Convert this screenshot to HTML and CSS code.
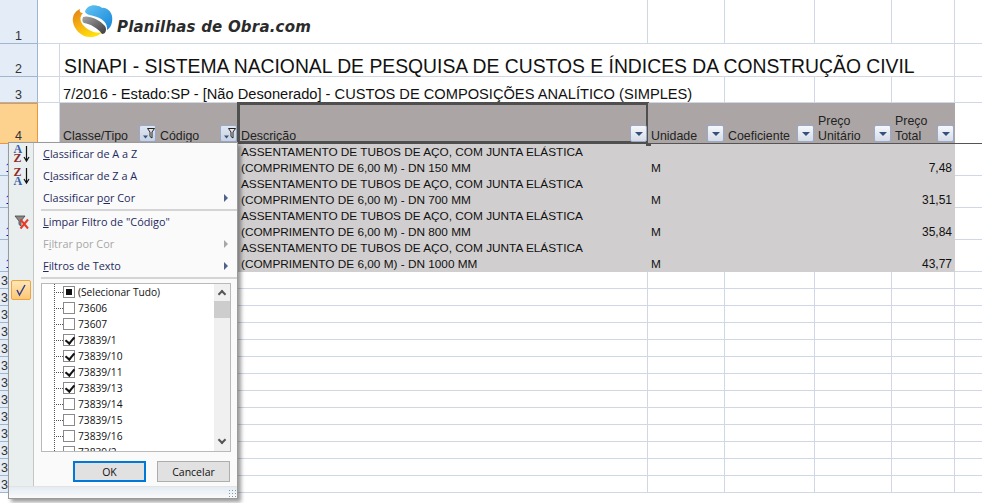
FILE: index.html
```html
<!DOCTYPE html>
<html lang="pt-BR">
<head>
    <meta charset="UTF-8">
    <title>SINAPI - Planilhas de Obra</title>
    <link rel="stylesheet" href="styles.css">
</head>
<body>
    <div class="sheet">
        <!-- row 1 -->
        <div class="rh">1</div>
        <div class="c logo-cell">
            <svg class="logo" width="44" height="36" viewBox="0 0 44 36">
                <defs>
                    <linearGradient id="gOrange" x1="0" y1="0" x2="0.6" y2="1">
                        <stop offset="0" stop-color="#e07f17"/>
                        <stop offset="0.5" stop-color="#f6ad12"/>
                        <stop offset="1" stop-color="#ffdf0a"/>
                    </linearGradient>
                    <linearGradient id="gBlue" x1="0" y1="0" x2="1" y2="1">
                        <stop offset="0" stop-color="#62c3f3"/>
                        <stop offset="1" stop-color="#1685d8"/>
                    </linearGradient>
                    <linearGradient id="gGray" x1="0" y1="0" x2="1" y2="1">
                        <stop offset="0" stop-color="#a5a5a5"/>
                        <stop offset="1" stop-color="#3b3b3b"/>
                    </linearGradient>
                </defs>
                <path d="M10 5C5 7 2 12 3 18C4 25 11 33 20 33C25 33 30 31 32 28C26 30 19 27 14 22C10 18 9 13 13 9C11 9 9 8 10 5Z" fill="url(#gOrange)"/>
                <path d="M15 8C16 3 22 0 28 2C30 2 31 3 32 4C36 3 41 7 42 12C43 18 41 24 37 26C38 20 33 15 27 13C22 11 18 12 15 8Z" fill="url(#gBlue)"/>
                <path d="M13 13C18 11 29 15 35 22C37 25 36 30 32 30C28 24 20 20 14 19C12 18 12 15 13 13Z" fill="url(#gGray)"/>
            </svg>
            <span class="logo-text">Planilhas de Obra.com</span>
        </div>
        <div class="c"></div><div class="c"></div><div class="c"></div><div class="c"></div><div class="c"></div>

        <!-- row 2 -->
        <div class="rh">2</div>
        <div class="c"></div>
        <div class="c title-cell">SINAPI - SISTEMA NACIONAL DE PESQUISA DE CUSTOS E ÍNDICES DA CONSTRUÇÃO CIVIL</div>
        <div class="c"></div>

        <!-- row 3 -->
        <div class="rh">3</div>
        <div class="c"></div>
        <div class="c sub-cell">7/2016 - Estado:SP - [Não Desonerado] - CUSTOS DE COMPOSIÇÕES ANALÍTICO (SIMPLES)</div>
        <div class="c"></div><div class="c"></div><div class="c"></div><div class="c"></div>

        <!-- row 4, table header -->
        <div class="rh rh-active">4</div>
        <div class="c head-gap"></div>
        <div class="c th"><span>Classe/Tipo</span><button class="fbtn on"><svg width="15" height="14" viewBox="0 0 15 14"><path d="M3 8.500h5l-2.500 3z" fill="#35507f"/><path d="M7.500 1.500h7l-2.500 3.500v6l-2-1.500v-4.500z" fill="#e4e4e4" stroke="#222"/></svg></button></div>
        <div class="c th"><span>Código</span><button class="fbtn on"><svg width="15" height="14" viewBox="0 0 15 14"><path d="M3 8.500h5l-2.500 3z" fill="#35507f"/><path d="M7.500 1.500h7l-2.500 3.500v6l-2-1.500v-4.500z" fill="#e4e4e4" stroke="#222"/></svg></button></div>
        <div class="c th selected"><span>Descrição</span><button class="fbtn"></button></div>
        <div class="c th"><span>Unidade</span><button class="fbtn"></button></div>
        <div class="c th"><span>Coeficiente</span><button class="fbtn"></button></div>
        <div class="c th"><span>Preço<br>Unitário</span><button class="fbtn"></button></div>
        <div class="c th"><span>Preço<br>Total</span><button class="fbtn"></button></div>
        <div class="c head-end"></div>

        <!-- rows 5-8, data -->
        <div class="rh rh-filtered">1234</div>
        <div class="c"></div><div class="c td"></div><div class="c td"></div>
        <div class="c td">ASSENTAMENTO DE TUBOS DE AÇO, COM JUNTA ELÁSTICA<br>(COMPRIMENTO DE 6,00 M) - DN 150 MM</div>
        <div class="c td">M</div><div class="c td"></div><div class="c td"></div><div class="c td num">7,48</div><div class="c"></div>

        <div class="rh rh-filtered">1235</div>
        <div class="c"></div><div class="c td"></div><div class="c td"></div>
        <div class="c td">ASSENTAMENTO DE TUBOS DE AÇO, COM JUNTA ELÁSTICA<br>(COMPRIMENTO DE 6,00 M) - DN 700 MM</div>
        <div class="c td">M</div><div class="c td"></div><div class="c td"></div><div class="c td num">31,51</div><div class="c"></div>

        <div class="rh rh-filtered">1236</div>
        <div class="c"></div><div class="c td"></div><div class="c td"></div>
        <div class="c td">ASSENTAMENTO DE TUBOS DE AÇO, COM JUNTA ELÁSTICA<br>(COMPRIMENTO DE 6,00 M) - DN 800 MM</div>
        <div class="c td">M</div><div class="c td"></div><div class="c td"></div><div class="c td num">35,84</div><div class="c"></div>

        <div class="rh rh-filtered">1237</div>
        <div class="c"></div><div class="c td"></div><div class="c td"></div>
        <div class="c td">ASSENTAMENTO DE TUBOS DE AÇO, COM JUNTA ELÁSTICA<br>(COMPRIMENTO DE 6,00 M) - DN 1000 MM</div>
        <div class="c td">M</div><div class="c td"></div><div class="c td"></div><div class="c td num">43,77</div><div class="c"></div>

        <!-- empty rows below the table -->
        <div class="rh">32076</div><div class="c"></div><div class="c"></div><div class="c"></div><div class="c"></div><div class="c"></div><div class="c"></div><div class="c"></div><div class="c"></div><div class="c"></div>
        <div class="rh">32077</div><div class="c"></div><div class="c"></div><div class="c"></div><div class="c"></div><div class="c"></div><div class="c"></div><div class="c"></div><div class="c"></div><div class="c"></div>
        <div class="rh">32078</div><div class="c"></div><div class="c"></div><div class="c"></div><div class="c"></div><div class="c"></div><div class="c"></div><div class="c"></div><div class="c"></div><div class="c"></div>
        <div class="rh">32079</div><div class="c"></div><div class="c"></div><div class="c"></div><div class="c"></div><div class="c"></div><div class="c"></div><div class="c"></div><div class="c"></div><div class="c"></div>
        <div class="rh">32080</div><div class="c"></div><div class="c"></div><div class="c"></div><div class="c"></div><div class="c"></div><div class="c"></div><div class="c"></div><div class="c"></div><div class="c"></div>
        <div class="rh">32081</div><div class="c"></div><div class="c"></div><div class="c"></div><div class="c"></div><div class="c"></div><div class="c"></div><div class="c"></div><div class="c"></div><div class="c"></div>
        <div class="rh">32082</div><div class="c"></div><div class="c"></div><div class="c"></div><div class="c"></div><div class="c"></div><div class="c"></div><div class="c"></div><div class="c"></div><div class="c"></div>
        <div class="rh">32083</div><div class="c"></div><div class="c"></div><div class="c"></div><div class="c"></div><div class="c"></div><div class="c"></div><div class="c"></div><div class="c"></div><div class="c"></div>
        <div class="rh">32084</div><div class="c"></div><div class="c"></div><div class="c"></div><div class="c"></div><div class="c"></div><div class="c"></div><div class="c"></div><div class="c"></div><div class="c"></div>
        <div class="rh">32085</div><div class="c"></div><div class="c"></div><div class="c"></div><div class="c"></div><div class="c"></div><div class="c"></div><div class="c"></div><div class="c"></div><div class="c"></div>
        <div class="rh">32086</div><div class="c"></div><div class="c"></div><div class="c"></div><div class="c"></div><div class="c"></div><div class="c"></div><div class="c"></div><div class="c"></div><div class="c"></div>
        <div class="rh">32087</div><div class="c"></div><div class="c"></div><div class="c"></div><div class="c"></div><div class="c"></div><div class="c"></div><div class="c"></div><div class="c"></div><div class="c"></div>
        <div class="rh">32088</div><div class="c"></div><div class="c"></div><div class="c"></div><div class="c"></div><div class="c"></div><div class="c"></div><div class="c"></div><div class="c"></div><div class="c"></div>
    </div>

    <!-- autofilter dropdown -->
    <div class="menu">
        <div class="menu-body">
            <div class="item">
                <span class="ico">
                    <svg width="22" height="22" viewBox="0 0 22 22">
                        <text x="2.500" y="9.500" class="az blue">A</text>
                        <text x="2.500" y="18.500" class="az red">Z</text>
                        <path d="M15.500 3v14M13 14l2.500 4 2.500-4" fill="none" stroke="#111" stroke-width="1.200"/>
                    </svg>
                </span>
                <span class="label"><u>C</u>lassificar de A a Z</span>
            </div>
            <div class="item">
                <span class="ico">
                    <svg width="22" height="22" viewBox="0 0 22 22">
                        <text x="2.500" y="10.500" class="az red">Z</text>
                        <text x="2.500" y="19.500" class="az blue">A</text>
                        <path d="M15.500 3v14M13 14l2.500 4 2.500-4" fill="none" stroke="#111" stroke-width="1.200"/>
                    </svg>
                </span>
                <span class="label">C<u>l</u>assificar de Z a A</span>
            </div>
            <div class="item">
                <span class="ico"></span>
                <span class="label">Classificar p<u>o</u>r Cor</span>
                <span class="arrow"></span>
            </div>
            <div class="sep"></div>
            <div class="item">
                <span class="ico">
                    <svg width="22" height="22" viewBox="0 0 22 22">
                        <path d="M4 5h10l-4 5v5l-2-1.500v-3.500z" fill="#8a8a8a" stroke="#444" stroke-width=".8"/>
                        <path d="M9.500 8.500l7.500 9M17 8.500l-7.500 9" stroke="#e8392b" stroke-width="2"/>
                    </svg>
                </span>
                <span class="label"><u>L</u>impar Filtro de "Código"</span>
            </div>
            <div class="item disabled">
                <span class="ico"></span>
                <span class="label">F<u>i</u>ltrar por Cor</span>
                <span class="arrow"></span>
            </div>
            <div class="item">
                <span class="ico"></span>
                <span class="label"><u>F</u>iltros de Texto</span>
                <span class="arrow"></span>
            </div>
            <div class="sep"></div>

            <div class="list-row">
                <span class="tick-box">
                    <svg width="14" height="14" viewBox="0 0 14 14"><path d="M3 7l2.500 5L11 2" fill="none" stroke="#33418f" stroke-width="1.500"/></svg>
                </span>
                <div class="list">
                    <div class="tree">
                        <div class="node"><span class="box mixed"></span>(Selecionar Tudo)</div>
                        <div class="node"><span class="box"></span>73606</div>
                        <div class="node"><span class="box"></span>73607</div>
                        <div class="node"><span class="box checked"></span>73839/1</div>
                        <div class="node"><span class="box checked"></span>73839/10</div>
                        <div class="node"><span class="box checked"></span>73839/11</div>
                        <div class="node"><span class="box checked"></span>73839/13</div>
                        <div class="node"><span class="box"></span>73839/14</div>
                        <div class="node"><span class="box"></span>73839/15</div>
                        <div class="node"><span class="box"></span>73839/16</div>
                        <div class="node"><span class="box"></span>73839/2</div>
                    </div>
                    <div class="scroll">
                        <span class="chev up"></span>
                        <span class="thumb"></span>
                        <span class="chev down"></span>
                    </div>
                </div>
            </div>

            <div class="actions">
                <button class="btn btn-default">OK</button>
                <button class="btn">Cancelar</button>
            </div>
        </div>
        <div class="grip"></div>
    </div>
</body>
</html>
```

FILE: styles.css
```css
* {
    box-sizing: border-box;
}

html, body {
    margin: 0;
    height: 503px;
    overflow: hidden;
    background: #fff;
}

body {
    position: relative;
    font-family: "Liberation Sans", Arial, sans-serif;
    color: #111;
}

/* spreadsheet grid */
.sheet {
    display: grid;
    grid-template-columns: 38px 22px 97px 81px 410px 77px 90px 77px 63px 28px;
    grid-template-rows: 44px 33px 26px 41px 32px 32px 32px 32px;
    grid-auto-rows: 17px;
    width: 983px;
}

.c {
    border-right: 1px solid #d0d7e5;
    border-bottom: 1px solid #d0d7e5;
    min-width: 0;
    font-size: 12px;
}

.rh {
    display: flex;
    align-items: flex-end;
    justify-content: center;
    background: #e4ecf7;
    border-right: 1px solid #9eb6ce;
    border-bottom: 1px solid #9eb6ce;
    font-size: 12.500px;
    line-height: 14px;
    color: #333;
    white-space: nowrap;
    overflow: hidden;
}

.rh-active {
    background: #fdd28e;
    border-top: 1px solid #f29536;
    border-right: 1px solid #f29536;
    border-bottom: 1px solid #f29536;
}

.rh-filtered {
    padding-left: 2px;
    color: #0000e0;
}

.logo-cell {
    grid-column: 2 / span 4;
    display: flex;
    align-items: center;
    padding: 0 0 0 32px;
}

.logo {
    flex: none;
}

.logo-text {
    margin: 10px 0 0 3px;
    font-family: "DejaVu Sans", sans-serif;
    font-style: oblique;
    font-weight: bold;
    font-size: 15px;
    letter-spacing: 0.200px;
    color: #2b2b2b;
    white-space: nowrap;
}

.title-cell {
    grid-column: 3 / span 7;
    display: flex;
    align-items: flex-end;
    padding: 0 0 0 4px;
    font-size: 19.340px;
    line-height: 20px;
    white-space: nowrap;
}

.sub-cell {
    grid-column: 3 / span 4;
    display: flex;
    align-items: flex-end;
    padding: 0 0 0 3px;
    font-size: 14.650px;
    line-height: 15px;
    white-space: nowrap;
}

.th {
    position: relative;
    display: flex;
    align-items: flex-end;
    justify-content: space-between;
    padding: 0 0 0 3px;
    background: #aba6a5;
    border-right: 0;
    border-bottom: 1px solid #555;
    font-size: 12.400px;
    line-height: 15px;
    color: #222;
}

.th span {
    margin-bottom: -1px;
}

.head-gap, .head-end {
    border-bottom: 1px solid #555;
}

.th.selected::before {
    content: "";
    position: absolute;
    inset: -1px;
    border: 3px solid #4f4f4f;
    pointer-events: none;
}

.th.selected::after {
    content: "";
    position: absolute;
    right: -3px;
    bottom: -3px;
    width: 5px;
    height: 5px;
    background: #4f4f4f;
}

.fbtn {
    position: relative;
    flex: none;
    display: flex;
    align-items: center;
    justify-content: center;
    width: 17px;
    height: 17px;
    margin: 0 1px 1px 0;
    padding: 0;
    border: 1px solid #98a9c9;
    border-radius: 2px;
    background: linear-gradient(#f6f8fb, #d6dce6);
}

.fbtn:empty::after {
    content: "";
    border-left: 4px solid transparent;
    border-right: 4px solid transparent;
    border-top: 4px solid #35507f;
}

.fbtn.on {
    background: linear-gradient(#dfe6f2, #c9d2e1);
}

.td {
    display: flex;
    align-items: flex-end;
    padding: 0 3px 0 3px;
    background: #d0cece;
    border-right: 0;
    border-bottom: 0;
    font-size: 11.800px;
    line-height: 16px;
    white-space: nowrap;
}

.num {
    justify-content: flex-end;
    padding-right: 3px;
    font-size: 12px;
}

/* filter dropdown */
.menu {
    position: absolute;
    left: 8px;
    top: 142px;
    width: 230px;
    height: 357px;
    display: flex;
    flex-direction: column;
    background: #fafafa;
    border: 1px solid #9a9a9a;
    box-shadow: 3px 3px 4px rgba(0,0,0,0.4);
    font-family: "Open Sans", "Noto Sans", sans-serif;
    font-size: 10.900px;
    color: #1f2a60;
}

.menu-body {
    flex: 1;
    min-height: 0;
    background: linear-gradient(90deg, #e9eeee 24px, #c5c5c5 24px, #c5c5c5 25px, transparent 25px);
}

.item {
    display: flex;
    align-items: center;
    height: 22px;
}

.ico {
    flex: none;
    display: flex;
    align-items: center;
    justify-content: center;
    width: 25px;
    height: 22px;
}

.az {
    font-family: "Liberation Serif", serif;
    font-size: 12px;
    font-weight: bold;
}

.blue {
    fill: #3b5ea8;
}

.red {
    fill: #8f2b2b;
}

.label {
    flex: 1;
    padding: 0 0 2px 9px;
    white-space: nowrap;
}

.arrow {
    flex: none;
    margin-right: 9px;
    border-top: 4px solid transparent;
    border-bottom: 4px solid transparent;
    border-left: 4px solid #51618c;
}

.disabled {
    color: #a7a7a7;
}

.disabled .arrow {
    border-left-color: #a7a7a7;
}

.sep {
    height: 2px;
    margin-left: 32px;
    background: #d4d4d4;
}

.list-row {
    position: relative;
    padding: 4px 6px 0 32px;
}

.tick-box {
    position: absolute;
    left: 2px;
    top: 1px;
    display: flex;
    align-items: center;
    justify-content: center;
    width: 20px;
    height: 20px;
    background: linear-gradient(#ffe6b4, #fdc777);
    border: 1px solid #f1a33b;
    border-radius: 2px;
}

.list {
    display: flex;
    height: 169px;
    background: #fff;
    border: 1px solid #b9b9b9;
    overflow: hidden;
}

.tree {
    flex: 1;
    padding: 0 0 0 12px;
    background-image: linear-gradient(#555 50%, transparent 50%);
    background-size: 1px 2px;
    background-position: 12px 0;
    background-repeat: repeat-y;
    overflow: hidden;
}

.node {
    display: flex;
    align-items: center;
    height: 16px;
    color: #111;
    font-size: 10.200px;
}

.node::before {
    content: "";
    flex: none;
    width: 9px;
    border-top: 1px dotted #555;
}

.box {
    flex: none;
    position: relative;
    width: 12px;
    height: 12px;
    margin-right: 3px;
    background: #fff;
    border: 1px solid #8a8a8a;
}

.mixed::after {
    content: "";
    position: absolute;
    inset: 2px;
    background: #111;
}

.checked::after {
    content: "";
    position: absolute;
    left: 3px;
    top: 0;
    width: 4px;
    height: 7px;
    border-right: 2px solid #111;
    border-bottom: 2px solid #111;
    transform: rotate(40deg);
}

.scroll {
    flex: none;
    display: flex;
    flex-direction: column;
    align-items: center;
    width: 16px;
    background: #f0f0f0;
}

.chev {
    flex: none;
    width: 6px;
    height: 6px;
    border-left: 2px solid #555;
    border-top: 2px solid #555;
}

.chev.up {
    margin-top: 7px;
    transform: rotate(45deg);
}

.chev.down {
    margin-top: auto;
    margin-bottom: 8px;
    transform: rotate(225deg);
}

.thumb {
    width: 16px;
    height: 17px;
    margin-top: 4px;
    background: #cdcdcd;
}

.actions {
    display: flex;
    justify-content: flex-end;
    gap: 11px;
    padding: 9px 7px 0 0;
}

.btn {
    width: 73px;
    height: 21px;
    padding: 0;
    background: #e1e1e1;
    border: 1px solid #adadad;
    font-family: "Open Sans", "Noto Sans", sans-serif;
    font-size: 10.500px;
    color: #111;
}

.btn-default {
    border: 2px solid #0078d7;
}

.grip {
    flex: none;
    position: relative;
    height: 12px;
    background: linear-gradient(#e3ecf3, #fafafa);
    border-top: 1px solid #e3e3e3;
}

.grip::after {
    content: "";
    position: absolute;
    right: 1px;
    bottom: 1px;
    width: 8px;
    height: 8px;
    background-image: radial-gradient(circle, #7d97a8 1px, transparent 1px);
    background-size: 3px 3px;
}
```
